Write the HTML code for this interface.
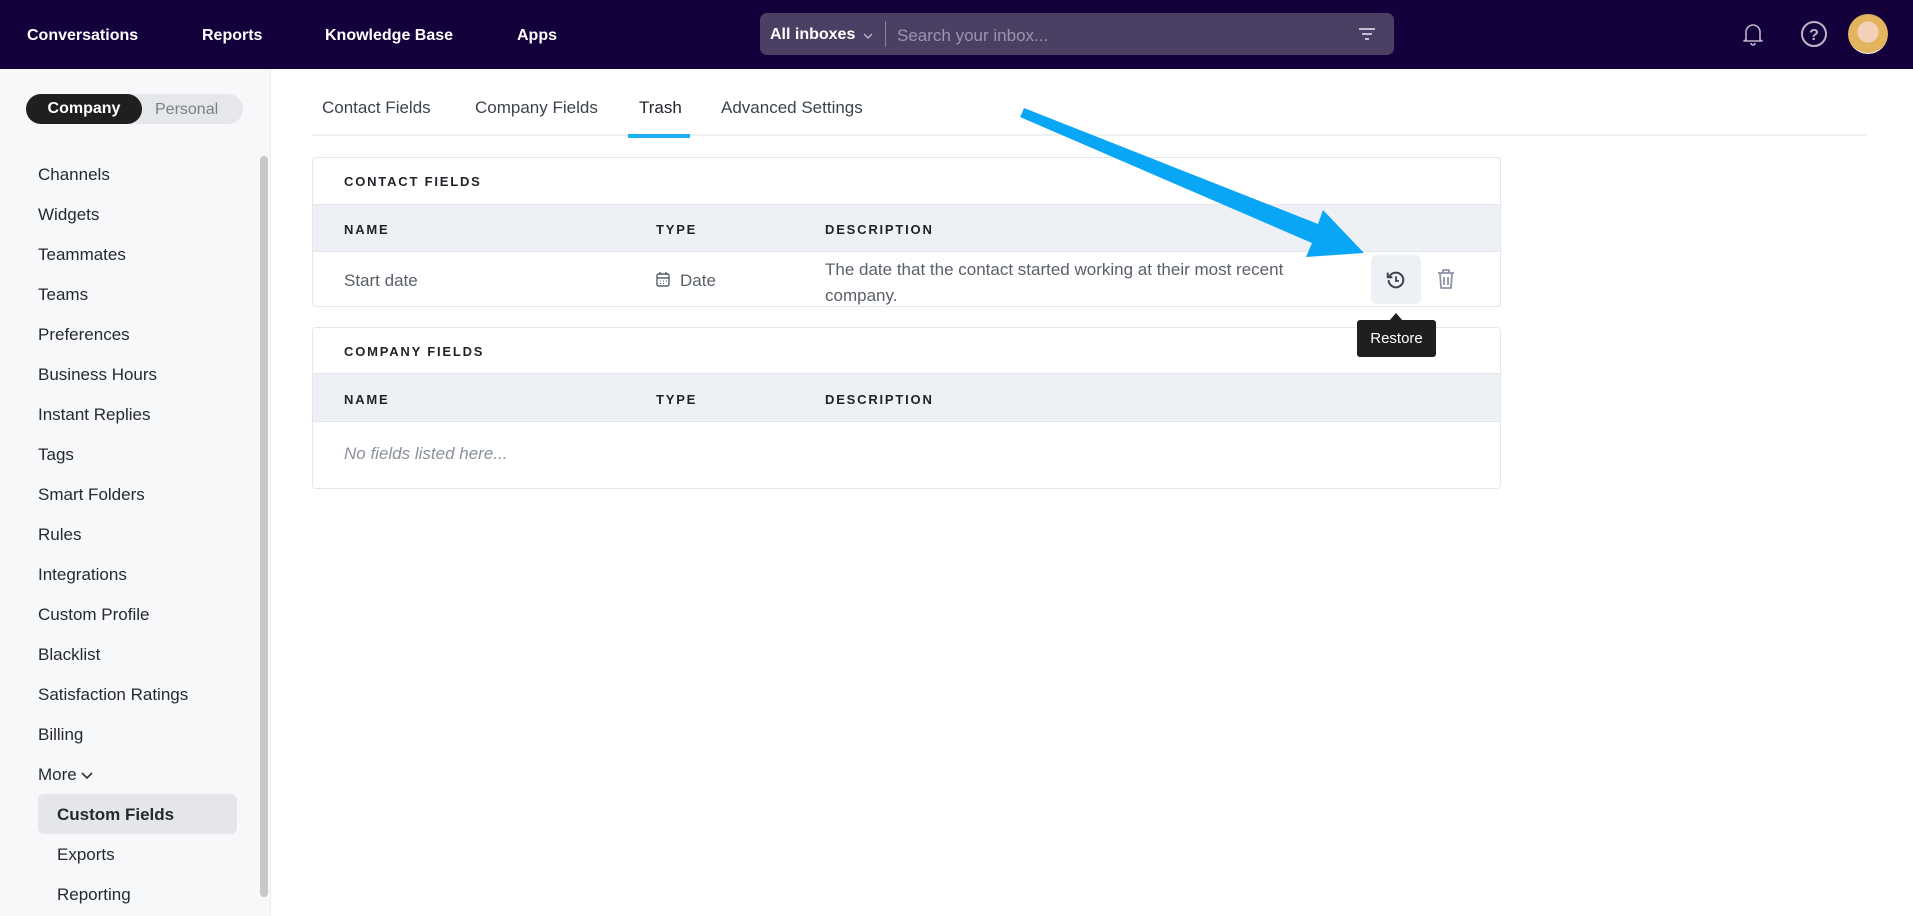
<!DOCTYPE html>
<html><head><meta charset="utf-8"><style>
*{box-sizing:border-box;margin:0;padding:0}
body{width:1913px;height:916px;overflow:hidden;font-family:"Liberation Sans",sans-serif;background:#fff;position:relative;color:#1f2328}
.nav{position:absolute;left:0;top:0;width:1913px;height:69px;background:#14003b}
.nav .l{position:absolute;top:27px;color:#fff;font-size:16px;font-weight:bold}
.search{position:absolute;left:760px;top:13px;width:634px;height:42px;background:#4b3f63;border-radius:7px}
.side{position:absolute;left:0;top:69px;width:271px;height:847px;background:#f7f8fa;border-right:1px solid #eceef1}
.tog{position:absolute;left:26px;top:94px;width:217px;height:30px;background:#e5e7eb;border-radius:15px}
.tog .a{position:absolute;left:0;top:1px;width:116px;height:30px;background:#1f1f1f;border-radius:15px;color:#fff;font-weight:bold;font-size:16px;text-align:center;line-height:30px;top:0}
.tog .b{position:absolute;left:129px;top:1px;line-height:30px;font-size:16px;color:#7a7f87}
.si{position:absolute;left:38px;font-size:17px;color:#26292e}
.tab{position:absolute;top:98px;font-size:17px;color:#3d434b}
.card{position:absolute;left:312px;width:1189px;border:1px solid #e3e6ea;border-radius:4px;background:#fff}
.h{position:absolute;left:31px;font-size:13px;font-weight:bold;letter-spacing:1.8px;color:#1f2328}
.row{position:absolute;left:0;width:1187px;background:#edf0f4;border-top:1px solid #e3e6ea;border-bottom:1px solid #e3e6ea}
.c{position:absolute;font-size:17px;color:#5a6069}
</style></head><body>
<div class="nav">
<div class="l" style="left:27px">Conversations</div>
<div class="l" style="left:202px">Reports</div>
<div class="l" style="left:325px">Knowledge Base</div>
<div class="l" style="left:517px">Apps</div>
<div class="search">
<span style="position:absolute;left:10px;top:13px;color:#fff;font-size:16px;font-weight:bold">All inboxes</span>
<svg style="position:absolute;left:103px;top:19px" width="10" height="8"><path d="M1 2l4 4 4-4" stroke="#b9b3c7" stroke-width="1.4" fill="none"/></svg>
<div style="position:absolute;left:125px;top:8px;width:1px;height:26px;background:#8a81a0"></div>
<span style="position:absolute;left:137px;top:13px;color:#9c95ad;font-size:17px">Search your inbox...</span>
<svg style="position:absolute;left:598px;top:13px" width="18" height="16"><path d="M1 3h16M4 8h10M7 13h4" stroke="#d6d1e0" stroke-width="1.8"/></svg>
</div>
<svg style="position:absolute;left:1741px;top:21px" width="24" height="26" viewBox="0 0 24 26"><path d="M5 19V11a7 7 0 0114 0v8l2 1H3z" fill="none" stroke="#bcb6c8" stroke-width="1.6" stroke-linejoin="round"/><path d="M10 22a2 2 0 004 0" stroke="#bcb6c8" stroke-width="1.6" fill="none"/></svg>
<svg style="position:absolute;left:1800px;top:20px" width="28" height="28"><circle cx="14" cy="14" r="12" fill="none" stroke="#bcb6c8" stroke-width="2"/><text x="14" y="20" text-anchor="middle" font-family="Liberation Sans" font-weight="bold" font-size="16" fill="#bcb6c8">?</text></svg>
<div style="position:absolute;left:1848px;top:14px;width:40px;height:40px;border-radius:50%;background:radial-gradient(circle at 50% 45%,#f4d0b8 0 35%,#e3b45e 36% 70%,#fff 71%)"></div>
</div>

<div class="side">
<div style="position:absolute;left:260px;top:87px;width:8px;height:741px;background:#c8c8c8;border-radius:4px"></div>
</div>
<div class="tog"><div class="a">Company</div><div class="b">Personal</div></div>
<div class="si" style="top:165px">Channels</div>
<div class="si" style="top:205px">Widgets</div>
<div class="si" style="top:245px">Teammates</div>
<div class="si" style="top:285px">Teams</div>
<div class="si" style="top:325px">Preferences</div>
<div class="si" style="top:365px">Business Hours</div>
<div class="si" style="top:405px">Instant Replies</div>
<div class="si" style="top:445px">Tags</div>
<div class="si" style="top:485px">Smart Folders</div>
<div class="si" style="top:525px">Rules</div>
<div class="si" style="top:565px">Integrations</div>
<div class="si" style="top:605px">Custom Profile</div>
<div class="si" style="top:645px">Blacklist</div>
<div class="si" style="top:685px">Satisfaction Ratings</div>
<div class="si" style="top:725px">Billing</div>
<div class="si" style="top:765px">More <svg width="12" height="8"><path d="M1 1l5 5 5-5" stroke="#333" stroke-width="1.6" fill="none"/></svg></div>
<div style="position:absolute;left:38px;top:794px;width:199px;height:40px;background:#e4e6ea;border-radius:6px"></div>
<div class="si" style="left:57px;top:805px;font-weight:bold">Custom Fields</div>
<div class="si" style="left:57px;top:845px">Exports</div>
<div class="si" style="left:57px;top:885px">Reporting</div>

<div style="position:absolute;left:312px;top:134px;width:1555px;height:2px;background:#edf0f3"></div>
<div class="tab" style="left:322px">Contact Fields</div>
<div class="tab" style="left:475px">Company Fields</div>
<div class="tab" style="left:639px;color:#1f2328">Trash</div>
<div class="tab" style="left:721px">Advanced Settings</div>
<div style="position:absolute;left:628px;top:134px;width:62px;height:4px;background:#1cb0f6"></div>

<div class="card" style="top:157px;height:150px">
<div class="h" style="top:16px">CONTACT FIELDS</div>
<div class="row" style="top:46px;height:48px"></div>
<div class="h" style="top:64px">NAME</div>
<div class="h" style="top:64px;left:343px">TYPE</div>
<div class="h" style="top:64px;left:512px">DESCRIPTION</div>
<div class="c" style="left:31px;top:113px">Start date</div>
<svg style="position:absolute;left:343px;top:113px" width="14" height="16"><rect x="1" y="3" width="12" height="12" rx="1.5" fill="none" stroke="#5a6069" stroke-width="1.4"/><path d="M1 7h12M4 1v3M10 1v3" stroke="#5a6069" stroke-width="1.4"/><path d="M4 10h1M7 10h1M10 10h1M4 12.5h1M7 12.5h1" stroke="#5a6069"/></svg>
<div class="c" style="left:367px;top:113px">Date</div>
<div class="c" style="left:512px;top:99px;line-height:26px">The date that the contact started working at their most recent<br>company.</div>
<div style="position:absolute;left:1058px;top:97px;width:50px;height:49px;background:#edf0f4;border-radius:5px"></div>
<svg style="position:absolute;left:1072px;top:111px" width="22" height="22" viewBox="0 0 24 24"><path d="M4.5 9A8 8 0 1 1 4 13" fill="none" stroke="#3d434b" stroke-width="2.2" stroke-linecap="round"/><path d="M3 4v5h5" fill="none" stroke="#3d434b" stroke-width="2.2" stroke-linejoin="round"/><path d="M12 8v5h3" fill="none" stroke="#3d434b" stroke-width="2"/></svg>
<svg style="position:absolute;left:1124px;top:110px" width="18" height="22" viewBox="0 0 18 22"><path d="M1 5h16M6 5V2h6v3M3 5l1 15h10l1-15M7 9v8M11 9v8" fill="none" stroke="#8a94a6" stroke-width="1.8" stroke-linejoin="round"/></svg>
</div>

<div class="card" style="top:327px;height:162px">
<div class="h" style="top:16px">COMPANY FIELDS</div>
<div class="row" style="top:45px;height:49px"></div>
<div class="h" style="top:64px">NAME</div>
<div class="h" style="top:64px;left:343px">TYPE</div>
<div class="h" style="top:64px;left:512px">DESCRIPTION</div>
<div class="c" style="left:31px;top:116px;font-style:italic;color:#8a909a">No fields listed here...</div>
</div>

<div style="position:absolute;left:1357px;top:320px;width:79px;height:37px;background:#1f1f1f;border-radius:3px;color:#fff;font-size:15px;text-align:center;line-height:37px">Restore</div>
<div style="position:absolute;left:1389px;top:313px;border-left:7px solid transparent;border-right:7px solid transparent;border-bottom:8px solid #1f1f1f"></div>

<svg style="position:absolute;left:0;top:0" width="1913" height="916"><path d="M1022 113L1024 108L1318 224L1323 210L1364 253L1306 257L1312 243L1020 117Z" fill="#0aa6f6"/></svg>
</body></html>
